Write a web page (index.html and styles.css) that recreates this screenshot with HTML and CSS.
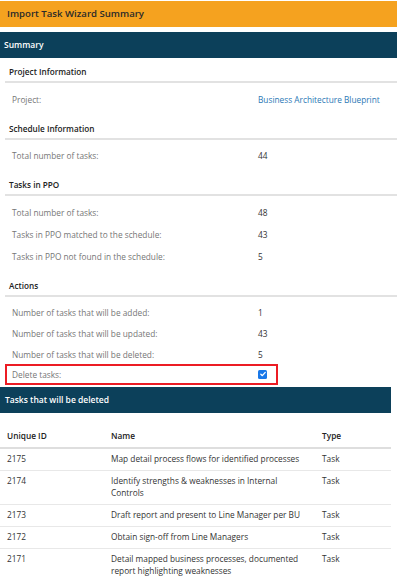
FILE: index.html
```html
<!DOCTYPE html>
<html lang="en">
<head>
<meta charset="utf-8">
<title>Import Task Wizard Summary</title>
<link rel="stylesheet" href="styles.css">
</head>
<body>
<div class="page">
  <div class="title">Import Task Wizard Summary</div>

  <div class="bar bar-top">Summary</div>

  <div class="section">
    <div class="sec-head">Project Information</div>
    <div class="rows">
      <div class="row"><span class="label">Project:</span><a class="link" href="#">Business Architecture Blueprint</a></div>
    </div>
  </div>

  <div class="section">
    <div class="sec-head">Schedule Information</div>
    <div class="rows">
      <div class="row"><span class="label">Total number of tasks:</span><span class="value">44</span></div>
    </div>
  </div>

  <div class="section">
    <div class="sec-head">Tasks in PPO</div>
    <div class="rows">
      <div class="row"><span class="label">Total number of tasks:</span><span class="value">48</span></div>
      <div class="row"><span class="label">Tasks in PPO matched to the schedule:</span><span class="value">43</span></div>
      <div class="row"><span class="label">Tasks in PPO not found in the schedule:</span><span class="value">5</span></div>
    </div>
  </div>

  <div class="section">
    <div class="sec-head">Actions</div>
    <div class="rows">
      <div class="row row-tight"><span class="label">Number of tasks that will be added:</span><span class="value">1</span></div>
      <div class="row row-tight"><span class="label">Number of tasks that will be updated:</span><span class="value">43</span></div>
      <div class="row row-tight"><span class="label">Number of tasks that will be deleted:</span><span class="value">5</span></div>
    </div>
    <div class="row row-flag">
      <span class="label">Delete tasks:</span>
      <span class="check"><svg viewBox="0 0 10 10" width="8" height="8"><path d="M2.3 5.3 L4.2 7.1 L7.8 3" fill="none" stroke="#fff" stroke-width="1.6" stroke-linecap="round" stroke-linejoin="round"/></svg></span>
    </div>
  </div>

  <div class="bar bar-del">Tasks that will be deleted</div>

  <table class="tasks">
    <colgroup><col class="c-id"><col class="c-name"><col class="c-type"></colgroup>
    <thead>
      <tr><th>Unique ID</th><th>Name</th><th>Type</th></tr>
    </thead>
    <tbody>
      <tr><td>2175</td><td>Map detail process flows for identified processes</td><td>Task</td></tr>
      <tr><td>2174</td><td>Identify strengths &amp; weaknesses in Internal Controls</td><td>Task</td></tr>
      <tr><td>2173</td><td>Draft report and present to Line Manager per BU</td><td>Task</td></tr>
      <tr><td>2172</td><td>Obtain sign-off from Line Managers</td><td>Task</td></tr>
      <tr><td>2171</td><td>Detail mapped business processes, documented report highlighting weaknesses</td><td>Task</td></tr>
    </tbody>
  </table>
</div>
</body>
</html>
```

FILE: styles.css
```css
* { box-sizing: border-box; }

html, body {
  margin: 0;
  padding: 0;
  background: #fff;
}

body {
  font-family: "Open Sans", "Noto Sans", "Liberation Sans", sans-serif;
  font-size: 8.3px;
  color: #333;
}

.page {
  width: 397px;
  padding-top: 1px;
}

.title {
  height: 26px;
  line-height: 26px;
  padding-left: 7px;
  background: #f5a21f;
  color: #2a2a2a;
  font-size: 9.6px;
  font-weight: 600;
}

.bar {
  height: 26px;
  line-height: 26px;
  background: #0c405a;
  color: #fff;
  font-weight: 600;
  font-size: 8.5px;
}

.bar-top {
  margin-top: 5px;
  padding-left: 4px;
}

.bar-del {
  width: 391px;
  margin-top: 2px;
  padding-left: 5px;
}

.section {
  margin-left: 5px;
  margin-top: 9.5px;
}

.bar-top + .section {
  margin-top: 5px;
}

.sec-head {
  height: 20px;
  line-height: 18px;
  padding-left: 4px;
  border-bottom: 2px solid #e2e2e2;
  color: #222;
  font-weight: 600;
  font-size: 8.2px;
}

.rows {
  padding-top: 5px;
}

.row {
  display: grid;
  grid-template-columns: 246px 1fr;
  align-items: center;
  height: 22px;
  padding-left: 7px;
}

.row-tight {
  height: 21px;
}

.label {
  color: #767676;
}

.value {
  color: #333;
}

.link {
  color: #2a77b5;
  text-decoration: none;
}

.row-flag {
  width: 273px;
  height: 21px;
  margin-top: -1px;
  border: 2px solid #ec1c24;
  padding-left: 5px;
}

.check {
  display: flex;
  align-items: center;
  justify-content: center;
  width: 9px;
  height: 9px;
  border-radius: 1.5px;
  background: #1a78e8;
}

.check svg {
  display: block;
}

.tasks {
  width: 391px;
  margin-top: 12px;
  border-collapse: collapse;
  table-layout: fixed;
}

.c-id { width: 104px; }
.c-name { width: 211px; }
.c-type { width: 76px; }

.tasks th {
  text-align: left;
  font-weight: 600;
  color: #222;
  line-height: 12px;
  padding: 5px 7px;
  border-bottom: 2px solid #dedede;
}

.tasks td {
  vertical-align: top;
  line-height: 12px;
  padding: 4px 7px 5px 7px;
  border-bottom: 1px solid #e8e8e8;
  color: #333;
}
```
